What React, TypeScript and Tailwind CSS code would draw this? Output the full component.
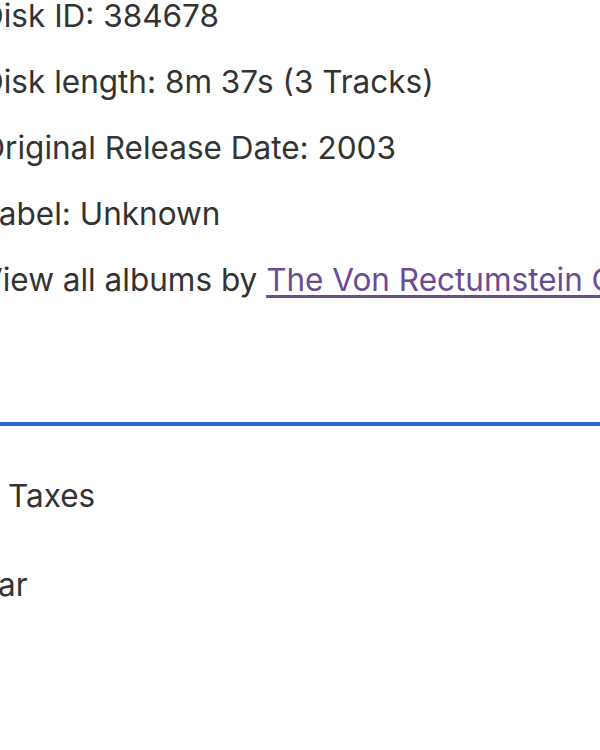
export default function App() {
  const font = { fontFamily: 'Inter, "Noto Sans", sans-serif' };
  return (
    <div className="w-[600px] h-[750px] overflow-hidden bg-white text-[#333333]" style={font}>
      <div className="ml-[-19px] text-[31.5px] leading-[66px] mt-[-17px]">
        <div>Disk ID: 384678</div>
        <div>Disk length: 8m 37s (3 Tracks)</div>
        <div>Original Release Date: 2003</div>
        <div>Label: Unknown</div>
        <div className="whitespace-nowrap">
          View all albums by{" "}
          <a href="#" className="text-[#6a4c93] underline decoration-[2.5px] underline-offset-[4px]">
            The Von Rectumstein Collection
          </a>
        </div>
      </div>
      <div className="mt-[109px] h-[3.5px] bg-[#3465d6]" />
      <div className="text-[31.5px] leading-[40px]">
        <div className="pl-[8px] mt-[50px]">Taxes</div>
        <div className="mt-[49px] ml-[-2px]">ar</div>
      </div>
    </div>
  );
}
